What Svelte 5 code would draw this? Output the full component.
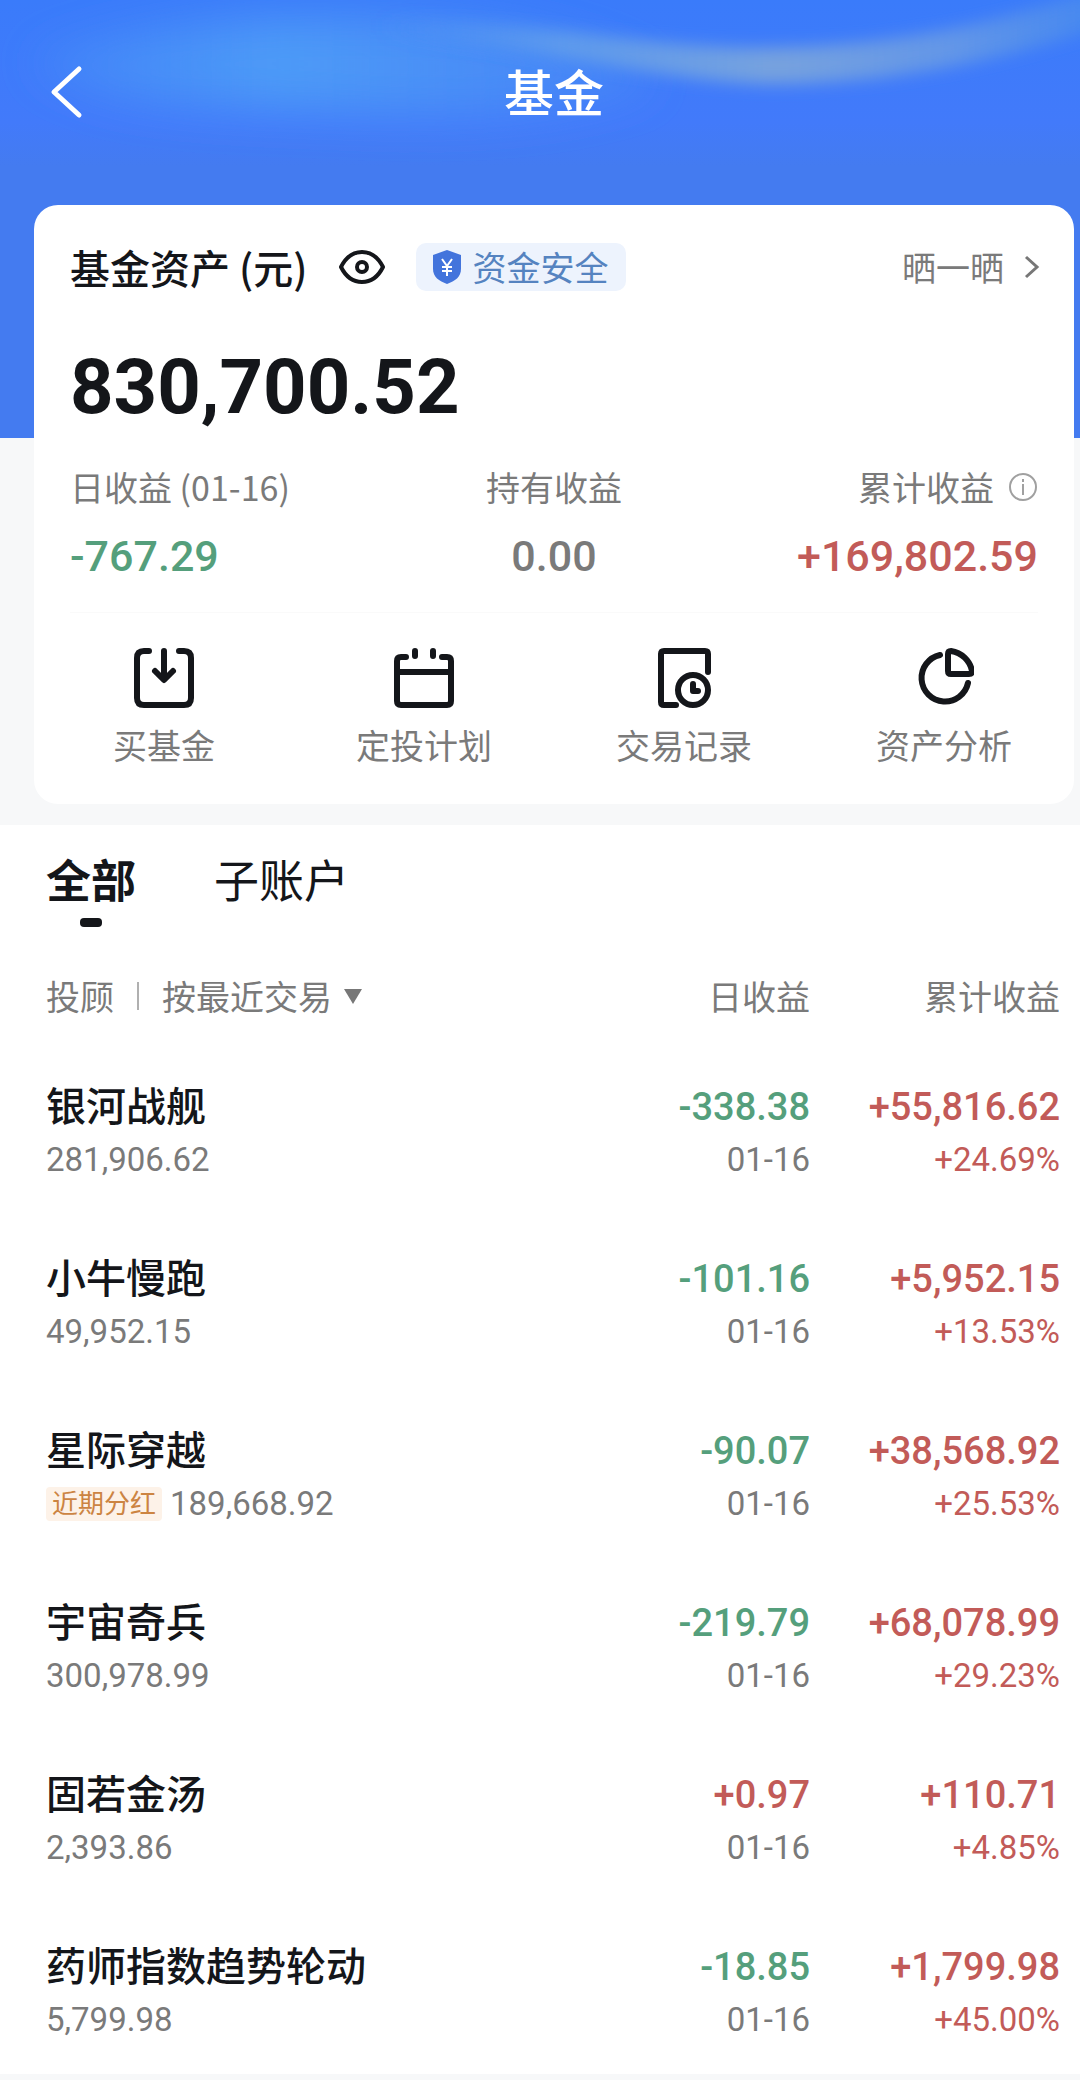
<script lang="ts">
  type Fund = {
    name: string;
    amount: string;
    tag?: string;
    day: string;
    date: string;
    total: string;
    rate: string;
  };

  const funds: Fund[] = [
    { name: "银河战舰", amount: "281,906.62", day: "-338.38", date: "01-16", total: "+55,816.62", rate: "+24.69%" },
    { name: "小牛慢跑", amount: "49,952.15", day: "-101.16", date: "01-16", total: "+5,952.15", rate: "+13.53%" },
    { name: "星际穿越", amount: "189,668.92", tag: "近期分红", day: "-90.07", date: "01-16", total: "+38,568.92", rate: "+25.53%" },
    { name: "宇宙奇兵", amount: "300,978.99", day: "-219.79", date: "01-16", total: "+68,078.99", rate: "+29.23%" },
    { name: "固若金汤", amount: "2,393.86", day: "+0.97", date: "01-16", total: "+110.71", rate: "+4.85%" },
    { name: "药师指数趋势轮动", amount: "5,799.98", day: "-18.85", date: "01-16", total: "+1,799.98", rate: "+45.00%" },
  ];

  const actions = [
    { id: "buy", label: "买基金" },
    { id: "plan", label: "定投计划" },
    { id: "records", label: "交易记录" },
    { id: "analysis", label: "资产分析" },
  ];

  const tabs = ["全部", "子账户"];
  let tab = $state(tabs[0]);

  const isLoss = (value: string) => value.startsWith("-");
</script>

<main>
  <header>
    <svg class="wave" viewBox="0 0 1080 205" preserveAspectRatio="none" aria-hidden="true">
      <defs>
        <filter id="soft" x="-20%" y="-60%" width="140%" height="220%">
          <feGaussianBlur stdDeviation="22" />
        </filter>
        <filter id="band" x="-20%" y="-60%" width="140%" height="220%">
          <feGaussianBlur stdDeviation="8" />
        </filter>
        <linearGradient id="glow" x1="0" x2="1">
          <stop offset="0" stop-color="#4a95f6" stop-opacity="0.4" />
          <stop offset="0.4" stop-color="#4d9bf7" />
          <stop offset="1" stop-color="#4c8ff4" stop-opacity="0.5" />
        </linearGradient>
        <linearGradient id="ribbon" x1="0" x2="1">
          <stop offset="0" stop-color="#5a9df0" stop-opacity="0" />
          <stop offset="0.25" stop-color="#64a0ea" stop-opacity="0.8" />
          <stop offset="0.55" stop-color="#77a2de" />
          <stop offset="0.8" stop-color="#6699e6" stop-opacity="0.9" />
          <stop offset="1" stop-color="#4a8dec" stop-opacity="0.7" />
        </linearGradient>
      </defs>
      <path
        d="M30 60C140 10 400 10 520 30C620 50 680 80 640 90C520 125 400 115 300 110C200 105 90 110 30 60Z"
        fill="url(#glow)"
        filter="url(#soft)"
      />
      <path
        d="M380 18C540 22 640 46 750 48C880 48 990 26 1100 -12V28C990 64 880 84 770 84C660 82 560 50 380 34Z"
        fill="url(#ribbon)"
        filter="url(#band)"
      />
    </svg>
    <nav>
      <button class="back" aria-label="返回">
        <svg width="36" height="56" viewBox="0 0 36 56">
          <path d="M31 5L6 28L31 51" fill="none" stroke="#fff" stroke-width="5" stroke-linecap="round" stroke-linejoin="round" />
        </svg>
      </button>
      <h1>基金</h1>
    </nav>
  </header>

  <section class="card">
    <div class="heading">
      <h2>基金资产 (元)</h2>
      <button class="eye" aria-label="隐藏金额">
        <svg width="48" height="36" viewBox="0 0 48 36" fill="none" stroke="#14161a">
          <path d="M3 18C8 8 15 3 24 3S40 8 45 18C40 28 33 33 24 33S8 28 3 18Z" stroke-width="4" stroke-linejoin="round" />
          <circle cx="24" cy="18" r="5" stroke-width="4" />
        </svg>
      </button>
      <a class="safe" href="#safe">
        <svg width="30" height="36" viewBox="0 0 30 36">
          <path d="M15 1L29 6V20C29 28 23 32 15 35C7 32 1 28 1 20V6Z" fill="#4374dc" />
          <path d="M10 10L15 17L20 10M15 17V27M10 18H20M10 22H20" fill="none" stroke="#fff" stroke-width="2" />
        </svg>
        资金安全
      </a>
      <a class="share" href="#share">
        晒一晒
        <svg width="16" height="24" viewBox="0 0 16 24">
          <path d="M2 2L13 12L2 22" fill="none" stroke="#777" stroke-width="3" />
        </svg>
      </a>
    </div>

    <p class="amount">830,700.52</p>

    <dl>
      <div>
        <dt>日收益 (01-16)</dt>
        <dd class="loss">-767.29</dd>
      </div>
      <div>
        <dt>持有收益</dt>
        <dd>0.00</dd>
      </div>
      <div>
        <dt>
          累计收益
          <svg width="30" height="30" viewBox="0 0 30 30" fill="none" stroke="#a0a0a0" stroke-width="2">
            <circle cx="15" cy="15" r="13" />
            <path d="M15 12V23M15 7V10" />
          </svg>
        </dt>
        <dd class="gain">+169,802.59</dd>
      </div>
    </dl>

    <div class="actions">
      {#each actions as action}
        <button>
          <svg width="60" height="60" viewBox="0 0 60 60" fill="none" stroke="#14161a" stroke-width="6" stroke-linecap="round" stroke-linejoin="round">
            {#if action.id === "buy"}
              <path d="M15 3H10Q3 3 3 10V50Q3 57 10 57H50Q57 57 57 50V10Q57 3 50 3H45" />
              <path d="M30 3V31M21 23L30 32L39 23" />
            {:else if action.id === "plan"}
              <path d="M12 9H7Q3 9 3 13V53Q3 57 7 57H53Q57 57 57 53V13Q57 9 53 9H48M3 24H57" />
              <path d="M21 3V8M39 3V8" />
            {:else if action.id === "records"}
              <path d="M54 24V6Q54 3 51 3H10Q7 3 7 6V54Q7 57 10 57H22" />
              <circle cx="39" cy="42" r="15" />
              <path d="M39 36V43H44" />
            {:else}
              <path d="M26 7A23.5 23.5 0 1 0 54 35" />
              <path d="M34 6Q34 3 37 3A25 25 0 0 1 58 23Q58 26 55 26H37Q34 26 34 23Z" />
            {/if}
          </svg>
          {action.label}
        </button>
      {/each}
    </div>
  </section>

  <section class="list">
    <div class="tabs" role="tablist">
      {#each tabs as name}
        <button role="tab" aria-selected={tab === name} class:selected={tab === name} onclick={() => (tab = name)}>
          {name}
        </button>
      {/each}
    </div>

    <table>
      <thead>
        <tr>
          <th>
            <div class="filters">
              <button>投顾</button>
              <i></i>
              <button>
                按最近交易
                <svg width="18" height="16" viewBox="0 0 18 16"><path d="M0 1H18L9 16Z" fill="#777" /></svg>
              </button>
            </div>
          </th>
          <th class="day">日收益</th>
          <th class="total">累计收益</th>
        </tr>
      </thead>
      <tbody>
        {#each funds as fund}
          <tr>
            <td>
              <strong>{fund.name}</strong>
              <div class="sub">
                {#if fund.tag}<mark>{fund.tag}</mark>{/if}
                {fund.amount}
              </div>
            </td>
            <td>
              <div class="value" class:loss={isLoss(fund.day)} class:gain={!isLoss(fund.day)}>{fund.day}</div>
              <div class="sub">{fund.date}</div>
            </td>
            <td>
              <div class="value" class:loss={isLoss(fund.total)} class:gain={!isLoss(fund.total)}>{fund.total}</div>
              <div class="sub" class:loss={isLoss(fund.rate)} class:gain={!isLoss(fund.rate)}>{fund.rate}</div>
            </td>
          </tr>
        {/each}
      </tbody>
    </table>
  </section>
</main>

<style>
  :global(body) {
    background: #f7f8f9;
  }

  main {
    --text: #14161a;
    --muted: #7a7a7a;
    --loss: #559f7c;
    --gain: #c25b58;
    --number: Roboto, "Noto Sans CJK SC", sans-serif;
    color: var(--text);
    font-family: "Noto Sans CJK SC", sans-serif;
    font-size: 34px;
    line-height: 40px;
  }

  h1,
  h2,
  p,
  dl,
  dd {
    margin: 0;
  }

  button {
    padding: 0;
    border: none;
    background: none;
    color: inherit;
    font: inherit;
    cursor: pointer;
  }

  a {
    color: inherit;
    text-decoration: none;
  }

  svg {
    display: block;
    flex: none;
  }

  header {
    position: relative;
    padding-bottom: 233px;
    background: linear-gradient(#3a7bfa, #427afa 28%, #447bf0 38%);
  }

  .wave {
    position: absolute;
    top: 0;
    left: 0;
    width: 100%;
    height: 205px;
  }

  nav {
    position: relative;
    display: grid;
    grid-template-columns: 60px 1fr 60px;
    align-items: center;
    height: 205px;
    box-sizing: border-box;
    padding: 0 6px 22px 34px;
  }

  .back {
    padding-left: 14px;
  }

  h1 {
    padding-bottom: 4px;
    color: #fff;
    font-size: 50px;
    font-weight: 500;
    line-height: 60px;
    text-align: center;
  }

  .card {
    position: relative;
    margin: -233px 6px 21px 34px;
    padding: 38px 0 39px;
    border-radius: 24px;
    background: #fff;
  }

  .heading {
    display: flex;
    align-items: center;
    height: 48px;
    padding: 0 34px 0 36px;
  }

  h2 {
    font-size: 40px;
    font-weight: 500;
  }

  .eye {
    margin: 0 30px 0 31px;
  }

  .safe,
  .share {
    display: flex;
    align-items: center;
  }

  .safe {
    gap: 10px;
    padding: 4px 18px 4px 16px;
    border-radius: 10px;
    background: #edf3fd;
    color: #5583c0;
  }

  .share {
    gap: 20px;
    margin-left: auto;
    color: var(--muted);
  }

  .amount {
    margin: 56px 36px 40px;
    font-family: var(--number);
    font-size: 76px;
    font-weight: 700;
    line-height: 80px;
  }

  dl {
    display: grid;
    grid-template-columns: 1fr 1fr 1fr;
    margin: 0 36px;
    padding-bottom: 32px;
    border-bottom: 1px solid #fafafa;
    color: var(--muted);
    text-align: center;
  }

  dl div:first-child {
    text-align: left;
  }

  dl div:last-child {
    text-align: right;
  }

  dt {
    display: flex;
    justify-content: center;
    align-items: center;
    gap: 14px;
  }

  div:first-child > dt {
    justify-content: flex-start;
  }

  div:last-child > dt {
    justify-content: flex-end;
  }

  dd {
    margin-top: 25px;
    font-family: var(--number);
    font-size: 43px;
    font-weight: 500;
    line-height: 48px;
  }

  .actions {
    display: grid;
    grid-template-columns: repeat(4, 1fr);
    padding-top: 35px;
  }

  .actions button {
    display: flex;
    flex-direction: column;
    align-items: center;
    gap: 17px;
    color: var(--muted);
  }

  .list {
    padding: 24px 20px 0 46px;
    background: #fff;
  }

  .tabs {
    display: flex;
    gap: 78px;
    margin-bottom: 49px;
  }

  .tabs button {
    padding-bottom: 18px;
    font-size: 45px;
    line-height: 60px;
  }

  .tabs .selected {
    position: relative;
    font-weight: 700;
  }

  .tabs .selected::after {
    content: "";
    position: absolute;
    bottom: 0;
    left: calc(50% - 11px);
    width: 22px;
    height: 9px;
    border-radius: 4px;
    background: var(--text);
  }

  table {
    width: 100%;
    border-collapse: collapse;
    table-layout: fixed;
  }

  th {
    padding: 0 0 32px;
    color: var(--muted);
    font-weight: 400;
    text-align: right;
  }

  .day,
  .total {
    width: 250px;
  }

  .filters {
    display: flex;
    align-items: center;
    gap: 23px;
  }

  .filters i {
    width: 2px;
    height: 28px;
    background: #b0b0b0;
  }

  .filters button {
    display: flex;
    align-items: center;
    gap: 12px;
  }

  td {
    padding: 32px 0 40px;
    text-align: right;
    vertical-align: top;
  }

  tr:last-child td {
    padding-bottom: 34px;
  }

  td:first-child {
    text-align: left;
  }

  strong {
    display: block;
    margin-bottom: 12px;
    font-size: 40px;
    font-weight: 500;
    line-height: 48px;
  }

  .value {
    margin-bottom: 6px;
    font-family: var(--number);
    font-size: 38px;
    font-weight: 500;
    line-height: 54px;
  }

  .sub {
    display: flex;
    justify-content: flex-end;
    align-items: center;
    gap: 8px;
    color: var(--muted);
    font-family: var(--number);
    font-size: 33px;
  }

  td:first-child .sub {
    justify-content: flex-start;
  }

  mark {
    padding: 0 6px;
    border-radius: 4px;
    background: #fdf2e8;
    color: #cc8442;
    font-size: 26px;
    line-height: 34px;
  }

  .loss {
    color: var(--loss);
  }

  .gain {
    color: var(--gain);
  }
</style>
